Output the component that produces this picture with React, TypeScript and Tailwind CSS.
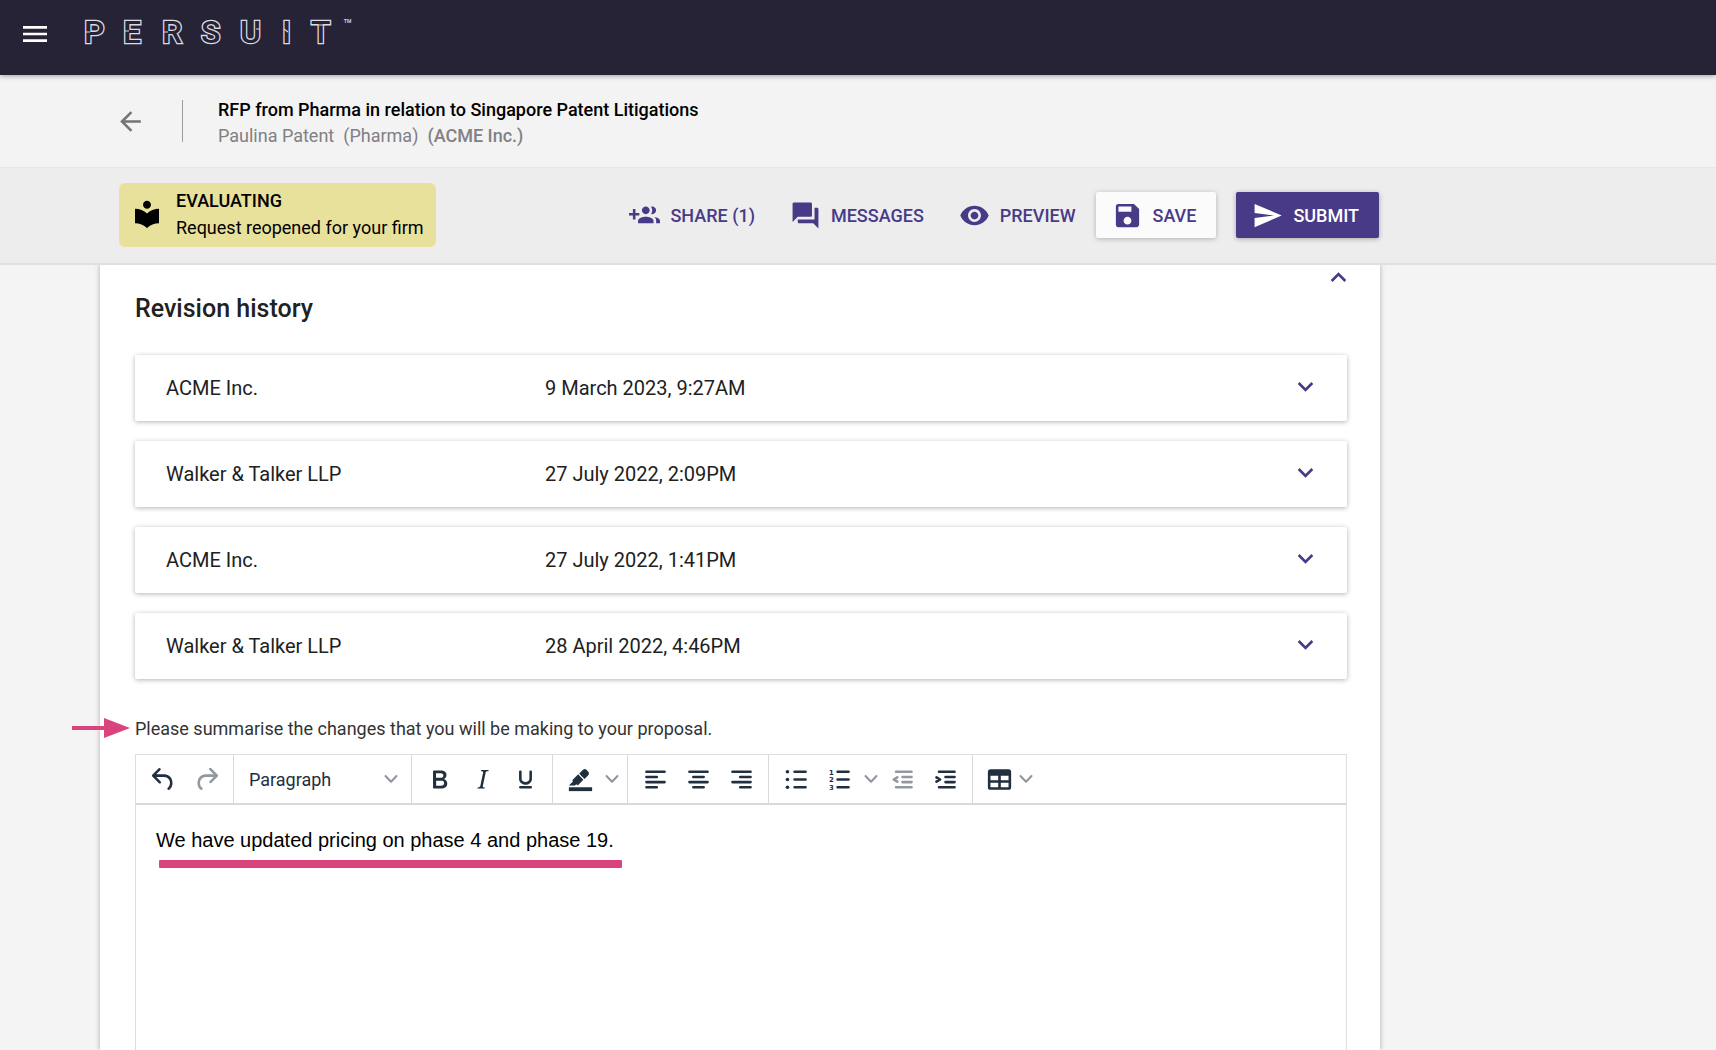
import React, { useState } from 'react';
import {
  MdArrowBack,
  MdForum,
  MdKeyboardArrowDown,
  MdKeyboardArrowUp,
  MdLocalLibrary,
  MdMenu,
  MdRemoveRedEye,
  MdSave,
  MdSend,
} from 'react-icons/md';

const revisions = [
  { firm: 'ACME Inc.', date: '9 March 2023, 9:27AM' },
  { firm: 'Walker & Talker LLP', date: '27 July 2022, 2:09PM' },
  { firm: 'ACME Inc.', date: '27 July 2022, 1:41PM' },
  { firm: 'Walker & Talker LLP', date: '28 April 2022, 4:46PM' },
];

function Logo() {
  return (
    <svg width="280" height="44" viewBox="0 0 280 44" className="font-['Roboto',sans-serif]" role="img" aria-label="PERSUIT">
      <text
        x="1 40 79 118 157 199 228"
        y="29"
        fontSize="32"
        fontWeight="500"
        fill="#272337"
        stroke="#dcdbe2"
        strokeWidth="2.6"
        paintOrder="stroke"
      >
        PERSUIT
      </text>
      {/* Breaks inside the letter stems */}
      <path d="M3 18h4M42 17h4M81 18h4M173 15h4M201 15l4 3M236 11h4" stroke="#dcdbe2" strokeWidth="1.2" />
      <text x="260" y="16" fontSize="15" fill="#dcdbe2">
        ™
      </text>
    </svg>
  );
}

function GroupAddIcon() {
  return (
    <svg width="31" height="31" viewBox="0 0 24 24" fill="currentColor">
      <path d="M8 10H5V7H3v3H0v2h3v3h2v-3h3v-2zm10 1c1.66 0 2.99-1.34 2.99-3S19.66 5 18 5c-.32 0-.63.05-.91.14.57.81.9 1.79.9 2.86s-.34 2.04-.9 2.86c.28.09.59.14.91.14zm-5 0c1.66 0 2.99-1.34 2.99-3S14.66 5 13 5c-1.66 0-3 1.34-3 3s1.34 3 3 3zm6.62 2.16c.83.73 1.38 1.66 1.38 2.84v2h3v-2c0-1.54-2.37-2.49-4.38-2.84zM13 13c-2 0-6 1-6 3v2h12v-2c0-2-4-3-6-3z" />
    </svg>
  );
}

function Glyph({ children }: { children: React.ReactNode }) {
  return (
    <svg width="31" height="31" viewBox="0 0 24 24" fill="currentColor" strokeLinecap="round" strokeLinejoin="round">
      {children}
    </svg>
  );
}

// Rounded horizontal strokes shared by the align, list and indent icons
function Lines({ d }: { d: string }) {
  return <path d={d} fill="none" stroke="currentColor" strokeWidth="2" />;
}

function SmallChevron() {
  return (
    <svg width="14" height="10" viewBox="0 0 14 10" fill="none" stroke="#8f959e" strokeWidth="2" strokeLinecap="round" strokeLinejoin="round">
      <path d="M1.5 2 7 7.8 12.5 2" />
    </svg>
  );
}

function ToolButton({ label, muted, children }: { label: string; muted?: boolean; children: React.ReactNode }) {
  return (
    <button
      type="button"
      aria-label={label}
      disabled={muted}
      className={`flex w-[43px] items-center justify-center ${muted ? 'text-[#9297a0]' : 'text-[#222f3e]'}`}
    >
      <Glyph>{children}</Glyph>
    </button>
  );
}

function MenuArrow({ label }: { label: string }) {
  return (
    <button type="button" aria-label={label} className="flex w-5 items-center justify-center">
      <SmallChevron />
    </button>
  );
}

function ToolGroup({ last, children }: { last?: boolean; children: React.ReactNode }) {
  return (
    <div className={`flex pl-[6px] pr-[5px] ${last ? '' : 'border-r border-[#d9d9d9]'}`}>{children}</div>
  );
}

function EditorToolbar() {
  return (
    <div className="flex h-[50px] border-b-2 border-[#d9d9d9]">
      <ToolGroup>
        <ToolButton label="Undo">
          <path d="M6.4 8H12c3.7 0 6.2 2 6.8 5.1.6 2.7-.4 5.6-2.3 6.8a1 1 0 0 1-1-1.8c1.1-.6 1.8-2.7 1.4-4.6-.5-2.1-2.1-3.5-4.9-3.5H6.4l3.3 3.3a1 1 0 1 1-1.4 1.4l-5-5a1 1 0 0 1 0-1.4l5-5a1 1 0 0 1 1.4 1.4L6.4 8z" />
        </ToolButton>
        <ToolButton label="Redo" muted>
          <path d="M17.6 10H12c-2.8 0-4.4 1.4-4.9 3.5-.4 2 .3 4 1.4 4.6a1 1 0 1 1-1 1.8c-2-1.2-2.9-4.1-2.3-6.8.6-3 3-5.1 6.8-5.1h5.6l-3.3-3.3a1 1 0 1 1 1.4-1.4l5 5a1 1 0 0 1 0 1.4l-5 5a1 1 0 0 1-1.4-1.4l3.3-3.3z" />
        </ToolButton>
      </ToolGroup>

      <div className="relative flex w-[178px] items-center border-r border-[#d9d9d9]">
        <select
          aria-label="Block format"
          className="h-full w-full appearance-none bg-transparent pl-[15px] text-[18px] text-[#222f3e]"
        >
          <option>Paragraph</option>
          <option>Heading 1</option>
          <option>Heading 2</option>
        </select>
        <span className="pointer-events-none absolute right-[13px]">
          <SmallChevron />
        </span>
      </div>

      <ToolGroup>
        <ToolButton label="Bold">
          <path d="M7.8 19c-.3 0-.5 0-.6-.2l-.2-.5V5.7c0-.2 0-.4.2-.5l.6-.2h5c1.5 0 2.7.3 3.5 1 .7.6 1.1 1.4 1.1 2.5a3 3 0 0 1-.6 1.9c-.4.6-1 1-1.6 1.2.4.1.9.3 1.3.6s.8.7 1 1.2c.4.4.5 1 .5 1.6 0 1.3-.4 2.3-1.3 3-.8.7-2.1 1-3.8 1H7.8zm5-8.3c.6 0 1.2-.1 1.6-.5.4-.3.6-.7.6-1.3 0-1.1-.8-1.7-2.3-1.7H9.3v3.5h3.4zm.5 6c.7 0 1.3-.1 1.7-.4.4-.4.6-.9.6-1.5s-.2-1-.7-1.4c-.4-.3-1-.4-2-.4H9.4v3.8h4z" />
        </ToolButton>
        <ToolButton label="Italic">
          <path d="M16.7 4.7l-.1.9h-.3c-.6 0-1 0-1.4.3-.3.3-.4.6-.5 1.1l-2.1 9.8v.6c0 .5.4.8 1.4.8h.2l-.2.8H8l.2-.8h.2c1.1 0 1.8-.5 2-1.5l2-9.8.1-.5c0-.6-.4-.8-1.4-.8h-.3l.2-.9h5.8z" />
        </ToolButton>
        <ToolButton label="Underline">
          <path d="M16 5c.6 0 1 .4 1 1v5.5a4 4 0 0 1-.4 1.8l-1 1.4a5.3 5.3 0 0 1-5.5 1 5 5 0 0 1-1.6-1c-.5-.4-.8-.9-1.1-1.4a4 4 0 0 1-.4-1.8V6c0-.6.4-1 1-1s1 .4 1 1v5.5c0 .3 0 .6.2 1l.6.7a3.3 3.3 0 0 0 2.2.8 3.4 3.4 0 0 0 2.2-.8c.3-.2.4-.5.6-.8l.2-.9V6c0-.6.4-1 1-1zM8 17h8c.6 0 1 .4 1 1s-.4 1-1 1H8a1 1 0 0 1 0-2z" />
        </ToolButton>
      </ToolGroup>

      <ToolGroup>
        <ToolButton label="Background color">
          <path d="M3 18h18v3H3z" />
          <path d="M7.7 16.7H3l3.3-3.3-.7-.8L10.2 8l4 4.1-4 4.2c-.2.2-.6.2-.8 0l-.6-.7-1.1 1.1zm5-7.5L11 7.4l3-2.9a2 2 0 0 1 2.6 0L18 6c.7.7.7 2 0 2.7l-2.9 2.9-1.8-1.8-.5-.6z" />
        </ToolButton>
        <MenuArrow label="Choose background color" />
      </ToolGroup>

      <ToolGroup>
        <ToolButton label="Align left">
          <Lines d="M5 6h14M5 10h8M5 14h14M5 18h8" />
        </ToolButton>
        <ToolButton label="Align center">
          <Lines d="M5 6h14M8 10h8M5 14h14M8 18h8" />
        </ToolButton>
        <ToolButton label="Align right">
          <Lines d="M5 6h14M11 10h8M5 14h14M11 18h8" />
        </ToolButton>
      </ToolGroup>

      <ToolGroup>
        <ToolButton label="Bullet list">
          <circle cx="5" cy="6" r="1.4" />
          <circle cx="5" cy="12" r="1.4" />
          <circle cx="5" cy="18" r="1.4" />
          <Lines d="M10.500 6H19M10.500 12H19M10.500 18H19" />
        </ToolButton>
        <ToolButton label="Numbered list">
          <g fontSize="5.3" fontWeight="700" className="font-['DejaVu_Sans',sans-serif]">
            <text x="3.8" y="8.2">1</text>
            <text x="3.8" y="14.2">2</text>
            <text x="3.8" y="20.2">3</text>
          </g>
          <Lines d="M10.500 6H19M10.500 12H19M10.500 18H19" />
        </ToolButton>
        <MenuArrow label="Numbered list styles" />
        <ToolButton label="Decrease indent" muted>
          <Lines d="M7 6h12M12 10h7M12 14h7M7 18h12" />
          <Lines d="M8 10.3 5.2 12 8 13.7" />
        </ToolButton>
        <ToolButton label="Increase indent">
          <Lines d="M7 6h12M12 10h7M12 14h7M7 18h12" />
          <Lines d="M5 10.3 7.8 12 5 13.7" />
        </ToolButton>
      </ToolGroup>

      <ToolGroup last>
        <button type="button" aria-label="Table" className="flex items-center gap-1 px-[5px] text-[#222f3e]">
          <Glyph>
            <path
              fillRule="evenodd"
              d="M5 4h14a2 2 0 0 1 2 2v12a2 2 0 0 1-2 2H5a2 2 0 0 1-2-2V6c0-1.100.9-2 2-2zm0 5v3.500h6V9zm8 0v3.500h6V9zm-8 5.500V18h6v-3.500zm8 0V18h6v-3.500z"
            />
          </Glyph>
          <SmallChevron />
        </button>
      </ToolGroup>
    </div>
  );
}

export default function App() {
  const [summary, setSummary] = useState('We have updated pricing on phase 4 and phase 19.');

  return (
    <div className="flex h-screen flex-col overflow-hidden bg-[#f4f4f4] font-['Roboto',sans-serif] text-[#212121]">
      {/* Top bar */}
      <header className="relative z-20 flex h-[75px] shrink-0 items-start bg-[#272337] pl-[19px] pt-[14px] shadow-[0_1px_5px_rgba(0,0,0,0.35)]">
        <button type="button" aria-label="Menu" className="mt-1 text-white">
          <MdMenu size={32} />
        </button>
        <a href="#home" className="ml-8">
          <Logo />
        </a>
      </header>

      {/* Request title */}
      <div className="flex h-[93px] shrink-0 items-center border-b border-[#e6e6e6] bg-[#f3f3f3] pl-[115px]">
        <a href="#back" aria-label="Back" className="text-[#757575]">
          <MdArrowBack size={31} />
        </a>
        <div className="ml-9 h-[42px] w-px bg-[#9e9e9e]" />
        <div className="ml-[35px] pt-1 leading-[26px]">
          <h1 className="text-[18px] font-medium text-black">
            RFP from Pharma in relation to Singapore Patent Litigations
          </h1>
          <p className="flex gap-[9px] text-[18px] text-[#808085]">
            <span>Paulina Patent</span>
            <span>(Pharma)</span>
            <span className="font-medium">(ACME Inc.)</span>
          </p>
        </div>
      </div>

      {/* Status and actions */}
      <div className="relative z-10 shrink-0 border-b-2 border-[#dfdfdf] bg-[#ededed] pb-4 pl-[119px] pt-[15px]">
        <div className="flex max-w-[1260px] items-center justify-between">
          <div className="flex items-center gap-[13px] rounded-md bg-[#e8e19b] pb-[6px] pl-3 pr-3 pt-1 text-black">
            <MdLocalLibrary size={32} />
            <div className="text-[18px] leading-[27px]">
              <p className="font-medium">EVALUATING</p>
              <p>Request reopened for your firm</p>
            </div>
          </div>
          <div className="flex items-center text-[18px] font-medium text-[#483a87]">
            <div className="mr-5 flex gap-[35px]">
              <button type="button" className="flex items-center gap-[10px]">
                <GroupAddIcon />
                SHARE (1)
              </button>
              <button type="button" className="flex items-center gap-[10px]">
                <MdForum size={31} />
                MESSAGES
              </button>
              <button type="button" className="flex items-center gap-[10px]">
                <MdRemoveRedEye size={31} />
                PREVIEW
              </button>
            </div>
            <button
              type="button"
              className="mr-5 flex h-[46px] items-center gap-[10px] rounded-xs bg-[#fbfbfb] pl-4 pr-5 shadow-[0_1px_5px_rgba(0,0,0,0.25)]"
            >
              <MdSave size={31} />
              SAVE
            </button>
            <button
              type="button"
              className="flex h-[46px] items-center gap-[10px] rounded-xs bg-[#483a87] pl-4 pr-5 text-white shadow-[0_1px_5px_rgba(0,0,0,0.3)]"
            >
              <MdSend size={31} />
              SUBMIT
            </button>
          </div>
        </div>
      </div>

      {/* Proposal card */}
      <main className="relative ml-[100px] flex w-full max-w-[1280px] flex-1 flex-col bg-white pl-[35px] pr-[33px] shadow-[0_0_5px_rgba(0,0,0,0.3)]">
        <button type="button" aria-label="Collapse" className="absolute -top-[3px] right-[26px] text-[#483a87]">
          <MdKeyboardArrowUp size={31} />
        </button>
        <h2 className="mt-6 text-[25px] font-medium leading-[40px]">Revision history</h2>

        <ul className="mt-[26px] flex flex-col gap-5">
          {revisions.map((revision) => (
            <li
              key={revision.date}
              className="flex h-[66px] items-center rounded-xs bg-white pl-[31px] pr-[26px] text-[20px] shadow-[0_1px_5px_rgba(0,0,0,0.3)]"
            >
              <span className="w-[379px]">{revision.firm}</span>
              <span className="flex-1">{revision.date}</span>
              <button type="button" aria-label="Expand" className="pb-1 text-[#483a87]">
                <MdKeyboardArrowDown size={31} />
              </button>
            </li>
          ))}
        </ul>

        <div className="relative mt-9">
          <svg className="absolute -left-[63px] top-[3px]" width="58" height="20" viewBox="0 0 58 20" fill="#d9447c">
            <path d="M0 8h32V0l26 10-26 10v-8H0z" />
          </svg>
          <label htmlFor="summary" className="block text-[18px] leading-[27px] text-[#333]">
            Please summarise the changes that you will be making to your proposal.
          </label>
        </div>

        <div className="mt-3 flex flex-1 flex-col border border-b-0 border-[#dedede]">
          <EditorToolbar />
          <div className="relative flex flex-1">
            <textarea
              id="summary"
              value={summary}
              onChange={(e) => setSummary(e.target.value)}
              className="flex-1 resize-none px-5 pt-5 font-['Liberation_Sans',sans-serif] text-[20px] leading-[30px] text-black outline-none"
            />
            <div className="pointer-events-none absolute left-[23px] top-[55px] h-2 w-[463px] rounded-[1px] bg-[#d9447c]" />
          </div>
        </div>
      </main>
    </div>
  );
}
